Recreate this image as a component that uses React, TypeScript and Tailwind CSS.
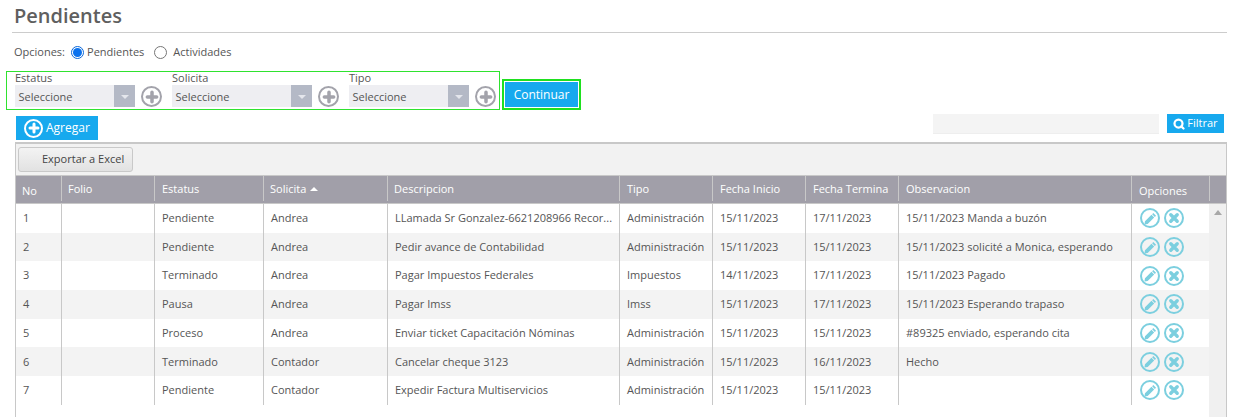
import { Search } from 'lucide-react';

const rows = [
  ['1', 'Pendiente', 'Andrea', 'LLamada Sr Gonzalez-6621208966 Recor...', 'Administración', '15/11/2023', '17/11/2023', '15/11/2023 Manda a buzón'],
  ['2', 'Pendiente', 'Andrea', 'Pedir avance de Contabilidad', 'Administración', '15/11/2023', '15/11/2023', '15/11/2023 solicité a Monica, esperando'],
  ['3', 'Terminado', 'Andrea', 'Pagar Impuestos Federales', 'Impuestos', '14/11/2023', '17/11/2023', '15/11/2023 Pagado'],
  ['4', 'Pausa', 'Andrea', 'Pagar Imss', 'Imss', '15/11/2023', '17/11/2023', '15/11/2023 Esperando trapaso'],
  ['5', 'Proceso', 'Andrea', 'Enviar ticket Capacitación Nóminas', 'Administración', '15/11/2023', '15/11/2023', '#89325 enviado, esperando cita'],
  ['6', 'Terminado', 'Contador', 'Cancelar cheque 3123', 'Administración', '15/11/2023', '16/11/2023', 'Hecho'],
  ['7', 'Pendiente', 'Contador', 'Expedir Factura Multiservicios', 'Administración', '15/11/2023', '15/11/2023', ''],
];

const cols = 'grid grid-cols-[46px_93px_109px_124px_232px_93px_93px_93px_233px_78px]';

function PlusIcon({ size }: { size: number }) {
  return (
    <svg width={size} height={size} viewBox="0 0 12 12" fill="none" stroke="currentColor" strokeWidth="3" strokeLinecap="round">
      <path d="M6 2v8M2 6h8" />
    </svg>
  );
}

function Filtro({ label, width }: { label: string; width: string }) {
  return (
    <div className="flex items-end gap-[6px]">
      <div className={width}>
        <div className="h-[13px] text-[11px] leading-[12px] text-[#555]">{label}</div>
        <div className="flex h-[22px] items-stretch justify-between bg-[#eeeef2] pl-[3.5px]">
          <span className="pt-[4px] text-[11px] leading-[15px] text-[#555]">Seleccione</span>
          <span className="flex w-[21px] items-center justify-center bg-[#b4b9c6]">
            <span className="mt-[2px] h-0 w-0 border-x-[4px] border-t-[4px] border-x-transparent border-t-[#e4e6ec]" />
          </span>
        </div>
      </div>
      <span className="flex h-[21px] w-[21px] items-center justify-center rounded-full border-2 border-[#a3a3ab] text-[#a3a3ab]">
        <PlusIcon size={14} />
      </span>
    </div>
  );
}

function Accion({ tipo }: { tipo: 'editar' | 'borrar' }) {
  return (
    <span className="flex h-[20px] w-[20px] items-center justify-center rounded-full border-2 border-[#7ccfdf] text-[#7ccfdf]">
      {tipo === 'editar' ? (
        <svg width="13" height="13" viewBox="0 0 12 12" fill="currentColor">
          <path d="M8.6 0.9 11.1 3.4 10 4.5 7.5 2ZM6.9 2.6 9.4 5.1 3.4 11.1 0.4 11.6 0.9 8.6Z" />
        </svg>
      ) : (
        <svg width="12" height="12" viewBox="0 0 12 12" fill="none" stroke="currentColor" strokeWidth="3.4" strokeLinecap="round">
          <path d="M2.8 2.8l6.4 6.4M9.2 2.8 2.8 9.2" />
        </svg>
      )}
    </span>
  );
}

export default function App() {
  const cabeceras = ['No', 'Folio', 'Estatus', 'Solicita', 'Descripcion', 'Tipo', 'Fecha Inicio', 'Fecha Termina', 'Observacion', 'Opciones'];

  return (
    <div className="h-[417px] overflow-hidden bg-white font-['Open_Sans',sans-serif] text-[11px] text-[#555]">
      <div className="pl-[12px] pr-[12px] pt-[2px]">
        <h1 className="h-[31px] border-b border-[#ccc] pl-[2px] text-[20px] font-semibold leading-[27px] text-[#5f5f5f]">Pendientes</h1>
      </div>

      <div className="mt-[8px] flex h-[18px] items-center pl-[14px] pt-[4px]">
        <span>Opciones:</span>
        <span className="ml-[6px] flex h-[13px] w-[13px] items-center justify-center rounded-full border border-[#0b67d8]">
          <span className="h-[9px] w-[9px] rounded-full bg-[#0b72ee]" />
        </span>
        <span className="ml-[3px]">Pendientes</span>
        <span className="ml-[10px] h-[13px] w-[13px] rounded-full border border-[#767676]" />
        <span className="ml-[6px]">Actividades</span>
      </div>

      <div className="mt-[12px] flex items-end pl-[6px]">
        <div className="flex h-[39px] w-[494px] items-end gap-[10px] border border-[#2fe22f] pb-[2px] pl-[8px]">
          <Filtro label="Estatus" width="w-[120px]" />
          <Filtro label="Solicita" width="w-[140px]" />
          <Filtro label="Tipo" width="w-[120px]" />
        </div>
        <button className="ml-[2px] h-[31px] w-[79px] border-2 border-[#1fe01f] bg-[#17a9ee] p-0 text-[12px] font-normal text-white outline-none">
          <span className="block h-full border border-white leading-[25px]">Continuar</span>
        </button>
      </div>

      <div className="mt-[4px] flex h-[26px] items-start justify-between pl-[16px] pr-[15px]">
        <button className="mt-[2px] flex h-[24px] w-[82px] items-center bg-[#17a9ee] pl-[8px] text-[12px] text-white">
          <span className="flex h-[19px] w-[19px] items-center justify-center rounded-full border-2 border-white">
            <PlusIcon size={12} />
          </span>
          <span className="ml-[3px]">Agregar</span>
        </button>
        <div className="flex items-start">
          <div className="h-[20px] w-[226px] border-b border-[#eee] bg-[#f4f4f4]" />
          <button className="ml-[8px] flex h-[19px] w-[57px] items-center justify-center gap-[2px] bg-[#17a9ee] text-[11px] font-normal text-white">
            <Search size={12} strokeWidth={4.5} />
            Filtrar
          </button>
        </div>
      </div>

      <div className="ml-[15px] mr-[12px] mt-[2px] h-[300px] border-x border-t-2 border-[#c8c8c8]">
        <div className="flex h-[31px] items-start bg-[#f2f2f2] pl-[2px] pt-[3px]">
          <button className="h-[25px] w-[115px] rounded-[3px] border border-[#c9c9c9] bg-gradient-to-b from-[#f3f3f3] to-[#e2e2e2] pl-[23px] text-left text-[11px] text-[#444]">
            Exportar a Excel
          </button>
        </div>

        <div className={`${cols} h-[29px] border-y border-[#c8c8c8] bg-[#a19fa9] text-[11px] font-normal text-white`}>
          {cabeceras.map((c) => (
            <div
              key={c}
              className={`border-r border-[#c8c8c8] ${c === 'No' || c === 'Folio' || c === 'Solicita' || c === 'Descripcion' ? 'pl-[6px]' : 'pl-[7px]'} ${c === 'No' || c === 'Opciones' ? 'pt-[7px]' : 'pt-[5px]'}`}
            >
              {c}
              {c === 'Solicita' && (
                <span className="mb-[2px] ml-[4px] inline-block h-0 w-0 border-x-[4px] border-b-[4px] border-x-transparent border-b-white" />
              )}
            </div>
          ))}
          <div />
        </div>

        <div className="flex h-[239px]">
          <div className="w-[1193px]">
            {rows.map((r, i) => (
              <div key={r[0]} className={`${cols} h-[28.7px] ${i % 2 === 1 ? 'bg-[#f3f3f3]' : 'bg-white'}`}>
                <Celda>{r[0]}</Celda>
                <Celda />
                <Celda>{r[1]}</Celda>
                <Celda>{r[2]}</Celda>
                <Celda>{r[3]}</Celda>
                <Celda>{r[4]}</Celda>
                <Celda>{r[5]}</Celda>
                <Celda>{r[6]}</Celda>
                <Celda>{r[7]}</Celda>
                <div className="flex items-center gap-[4px] pl-[8px]">
                  <Accion tipo="editar" />
                  <Accion tipo="borrar" />
                </div>
              </div>
            ))}
          </div>
          <div className="flex w-[18px] justify-center bg-[#f0f0f0] pt-[6px]">
            <span className="h-0 w-0 border-x-[4px] border-b-[5px] border-x-transparent border-b-[#a8a8a8]" />
          </div>
        </div>
      </div>
    </div>
  );
}

function Celda({ children }: { children?: React.ReactNode }) {
  return (
    <div className="flex items-center overflow-hidden whitespace-nowrap border-r border-[#c8c8c8] pl-[7px] text-[#555]">
      {children}
    </div>
  );
}
